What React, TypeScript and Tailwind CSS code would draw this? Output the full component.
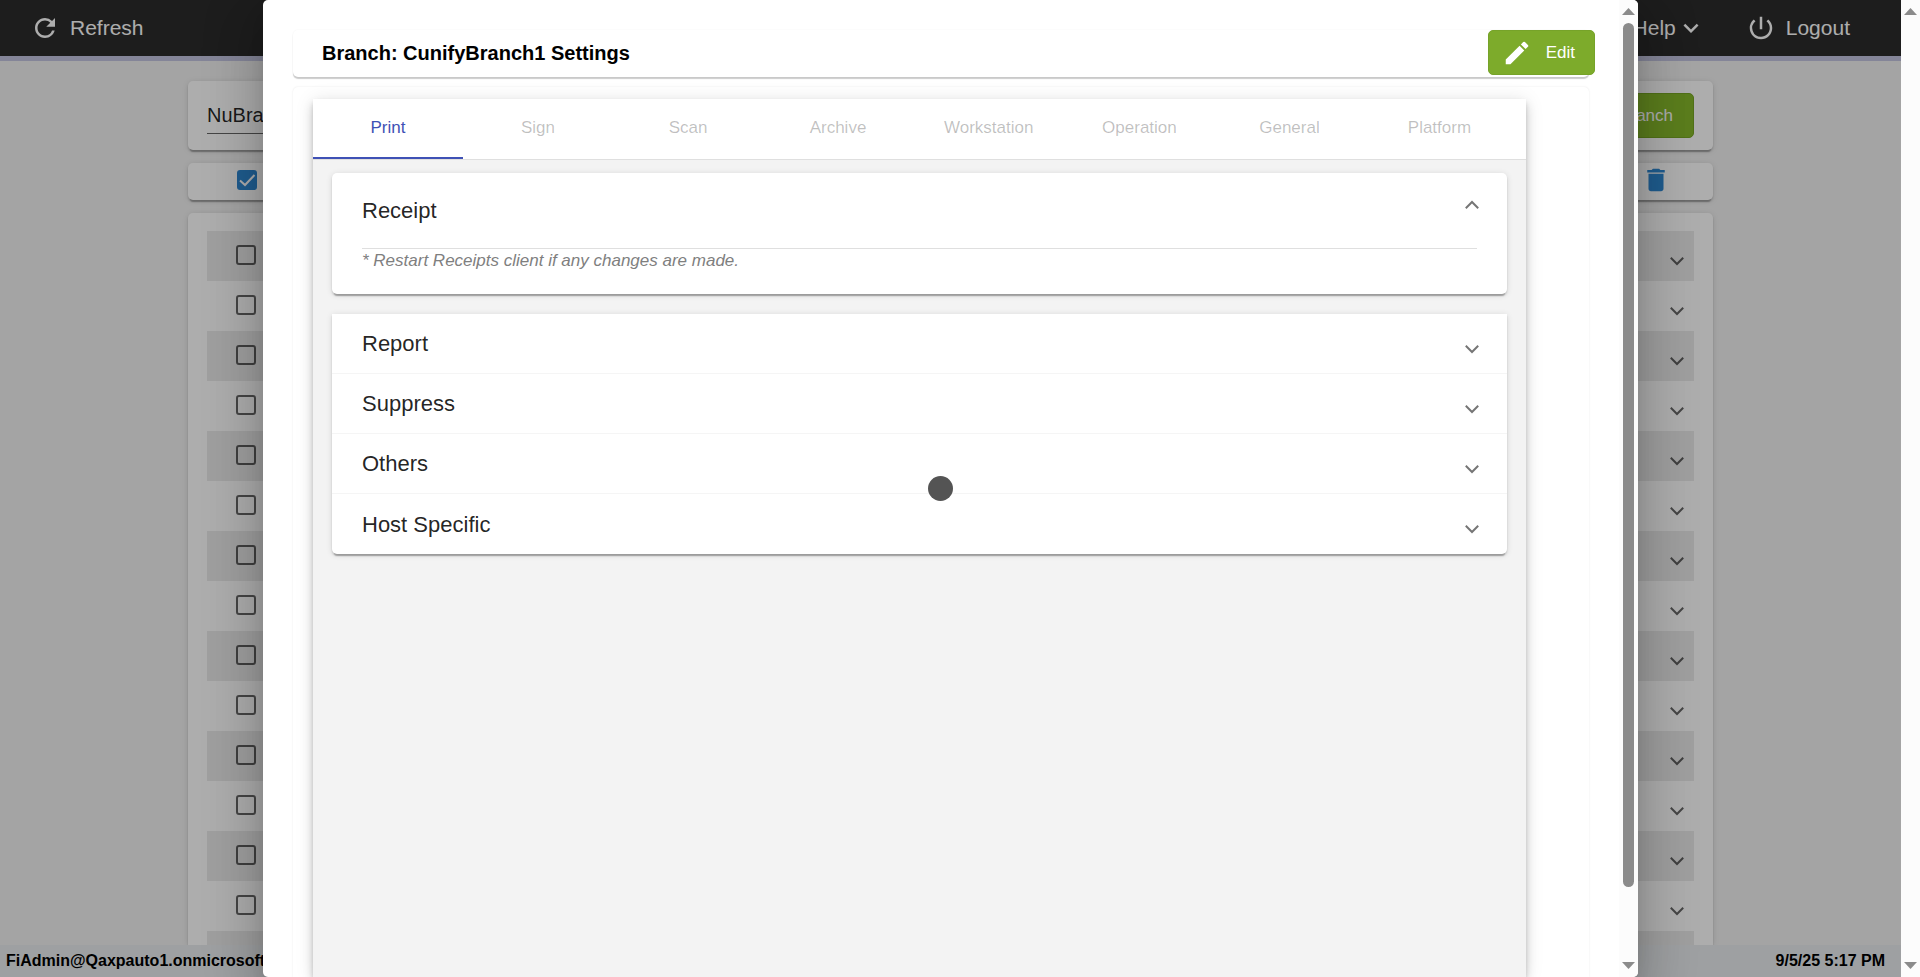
import React, { useState } from "react";
import {
  MdDelete,
  MdEdit,
  MdExpandMore,
  MdPowerSettingsNew,
  MdRefresh,
} from "react-icons/md";

const CARD_SHADOW =
  "shadow-[0_4px_1px_-2px_rgba(0,0,0,0.2),0_2px_2px_0_rgba(0,0,0,0.14),0_1px_6px_0_rgba(0,0,0,0.12)]";

const TABS = [
  "Print",
  "Sign",
  "Scan",
  "Archive",
  "Workstation",
  "Operation",
  "General",
  "Platform",
];

const SECTIONS = ["Report", "Suppress", "Others", "Host Specific"];

const ROWS = Array.from({ length: 15 }, (_, i) => i + 1);

function Chevron({ up = false }: { up?: boolean }) {
  return (
    <svg
      width="14"
      height="10"
      viewBox="0 0 14 10"
      fill="none"
      stroke="currentColor"
      strokeWidth="2"
      aria-hidden="true"
    >
      <path d={up ? "M0.8 8.2 7 2l6.2 6.2" : "M0.8 1.8 7 8l6.2-6.2"} />
    </svg>
  );
}

function ScrollBar({ thumb }: { thumb?: boolean }) {
  return (
    <div
      aria-hidden="true"
      className="flex w-[19px] shrink-0 flex-col items-center bg-[#fcfcfc] py-2"
    >
      <svg width="13" height="7" viewBox="0 0 13 7" className="shrink-0 fill-[#8b8b8b]">
        <path d="M6.5 0 13 7H0z" />
      </svg>
      <div className="flex w-full flex-1 flex-col items-center pt-2 pb-[75px]">
        {thumb && <div className="w-[11px] flex-1 rounded-full bg-[#8b8b8b]" />}
      </div>
      <svg width="13" height="7" viewBox="0 0 13 7" className="shrink-0 fill-[#8b8b8b]">
        <path d="M6.5 7 0 0h13z" />
      </svg>
    </div>
  );
}

function TopBar() {
  return (
    <header className="flex h-[61px] shrink-0 items-center justify-between border-b-[5px] border-[#c3c5e0] bg-[#2c2c2c] pr-[51px] pl-[30px] text-[21px] text-white">
      <button className="flex items-center gap-2.5">
        <MdRefresh size={30} />
        Refresh
      </button>
      <div className="flex items-center gap-10">
        <button className="flex items-center">
          Help
          <MdExpandMore size={30} />
        </button>
        <button className="flex items-center gap-2.5">
          <MdPowerSettingsNew size={30} />
          Logout
        </button>
      </div>
    </header>
  );
}

function BranchPage() {
  return (
    <main className="mx-[188px] flex min-h-0 flex-1 flex-col gap-[13px] pt-5">
      <section
        className={`flex h-[69px] shrink-0 items-center justify-between rounded-[5px] bg-white px-[19px] ${CARD_SHADOW}`}
      >
        <input
          aria-label="Search branch"
          defaultValue="NuBranch"
          className="h-9 w-[260px] border-b border-black/60 text-[20px] text-black/87 outline-none"
        />
        <button className="h-[45px] rounded-[5px] border border-[#76a524] bg-[#86b92c] px-5 text-[17px] text-white">
          Add Branch
        </button>
      </section>

      <section
        className={`flex h-[37px] shrink-0 items-center justify-between rounded-[5px] bg-white pr-[42px] pb-[3px] pl-[49px] ${CARD_SHADOW}`}
      >
        <label className="relative flex size-5">
          <input
            type="checkbox"
            defaultChecked
            aria-label="Select all branches"
            className="size-5 appearance-none rounded-[3px] bg-[#2f88d2]"
          />
          <svg
            viewBox="0 0 20 20"
            className="pointer-events-none absolute inset-0 fill-none stroke-white stroke-2"
            aria-hidden="true"
          >
            <path d="M3 10.5 8 15 17.5 5" />
          </svg>
        </label>
        <button aria-label="Delete selected" className="text-[#2f88d2]">
          <MdDelete size={30} />
        </button>
      </section>

      <section
        className={`min-h-0 flex-1 overflow-hidden rounded-t-[5px] bg-white px-[19px] pt-[18px] ${CARD_SHADOW}`}
      >
        <ul>
          {ROWS.map((row) => (
            <li
              key={row}
              className="flex h-[50px] items-center justify-between pr-2.5 pb-0.5 pl-[29px] odd:bg-[#ebebeb]"
            >
              <input
                type="checkbox"
                aria-label={`Select branch ${row}`}
                className="size-5 appearance-none rounded-[3px] border-2 border-black/60"
              />
              <button
                aria-label={`Expand branch ${row}`}
                className="pt-3 text-black/60"
              >
                <Chevron />
              </button>
            </li>
          ))}
        </ul>
      </section>
    </main>
  );
}

function SettingsDialog() {
  const [tab, setTab] = useState("Print");
  return (
    <div
      role="dialog"
      aria-label="Branch settings"
      className="mx-auto flex w-full max-w-[1375px] overflow-hidden rounded-[5px] bg-white shadow-[0_14px_19px_-9px_rgba(0,0,0,0.2),0_30px_48px_4px_rgba(0,0,0,0.14),0_11px_58px_10px_rgba(0,0,0,0.12)]"
    >
      <div className="flex min-w-0 flex-1 flex-col gap-2.5 overflow-hidden px-[30px] pt-[30px]">
        <div className="flex h-[47px] shrink-0 items-start justify-between rounded-[5px] pl-[29px] shadow-[0_2px_1px_0_rgba(0,0,0,0.2),0_0_2px_0_rgba(0,0,0,0.06)]">
          <h1 className="text-[20px] leading-[47px] font-bold text-black">
            Branch: CunifyBranch1 Settings
          </h1>
          <button className="-mr-1.5 flex h-[45px] items-center gap-3.5 rounded-[5px] border border-[#76a329] bg-[#7dab2b] pr-[19px] pl-[13px] text-[17px] text-white">
            <MdEdit size={30} />
            Edit
          </button>
        </div>

        <div className="flex flex-1 flex-col rounded-t-[5px] pt-3 pr-[63px] pl-5 shadow-[0_0_2px_0_rgba(0,0,0,0.1)]">
          <div className="flex-1 bg-[#f3f3f3] shadow-[0_3px_5px_-1px_rgba(0,0,0,0.2),0_6px_10px_0_rgba(0,0,0,0.14),0_1px_18px_0_rgba(0,0,0,0.1)]">
            <nav role="tablist" className="flex h-[61px] border-b border-[#dfdfdf] bg-white">
              {TABS.map((name) => (
                <button
                  key={name}
                  role="tab"
                  aria-selected={tab === name}
                  onClick={() => setTab(name)}
                  className={`min-w-[150px] border-b-2 px-[31px] text-[17px] ${
                    tab === name
                      ? "border-[#3f51b5] text-[#3f51b5]"
                      : "border-transparent text-black/25"
                  }`}
                >
                  {name}
                </button>
              ))}
            </nav>

            <div className="flex flex-col gap-5 px-[19px] pt-[13px]">
              <section className={`rounded-[5px] bg-white pb-4 ${CARD_SHADOW}`}>
                <button className="flex h-[75px] w-full items-center justify-between pr-7 pl-[30px] text-[22px] text-black/87">
                  Receipt
                  <span className="pb-3 text-black/54">
                    <Chevron up />
                  </span>
                </button>
                <p className="mx-[30px] border-t border-[#dfdfdf] pb-[5px] text-[17px] leading-6 text-[#7f7f7f] italic">
                  * Restart Receipts client if any changes are made.
                </p>
              </section>

              <section
                className={`divide-y divide-[#f5f5f5] rounded-b-[5px] bg-white ${CARD_SHADOW}`}
              >
                {SECTIONS.map((name) => (
                  <button
                    key={name}
                    className="flex h-[60px] w-full items-center justify-between pr-7 pl-[30px] text-[22px] text-black/87"
                  >
                    {name}
                    <span className="pt-2.5 text-black/54">
                      <Chevron />
                    </span>
                  </button>
                ))}
              </section>
            </div>
          </div>
        </div>
      </div>
      <ScrollBar thumb />
    </div>
  );
}

export default function App() {
  return (
    <div className="flex h-screen overflow-hidden font-['Liberation_Sans',Arial,sans-serif]">
      <div className="relative flex min-w-0 flex-1 flex-col overflow-hidden bg-[#f2f2f2]">
        <TopBar />
        <BranchPage />
        <footer className="relative flex h-8 shrink-0 items-center justify-between bg-[#e9ecef] pr-4 pl-1.5 text-[16px] font-bold text-black">
          <span>FiAdmin@Qaxpauto1.onmicrosoft.com</span>
          <span>9/5/25 5:17 PM</span>
        </footer>

        <div className="absolute inset-0 flex bg-black/32">
          <SettingsDialog />
        </div>
        <div className="pointer-events-none absolute inset-0 flex items-center justify-center">
          <div
            role="status"
            aria-label="Loading"
            className="mr-5 size-[25px] rounded-full bg-[#545454]"
          />
        </div>
      </div>
      <ScrollBar />
    </div>
  );
}
